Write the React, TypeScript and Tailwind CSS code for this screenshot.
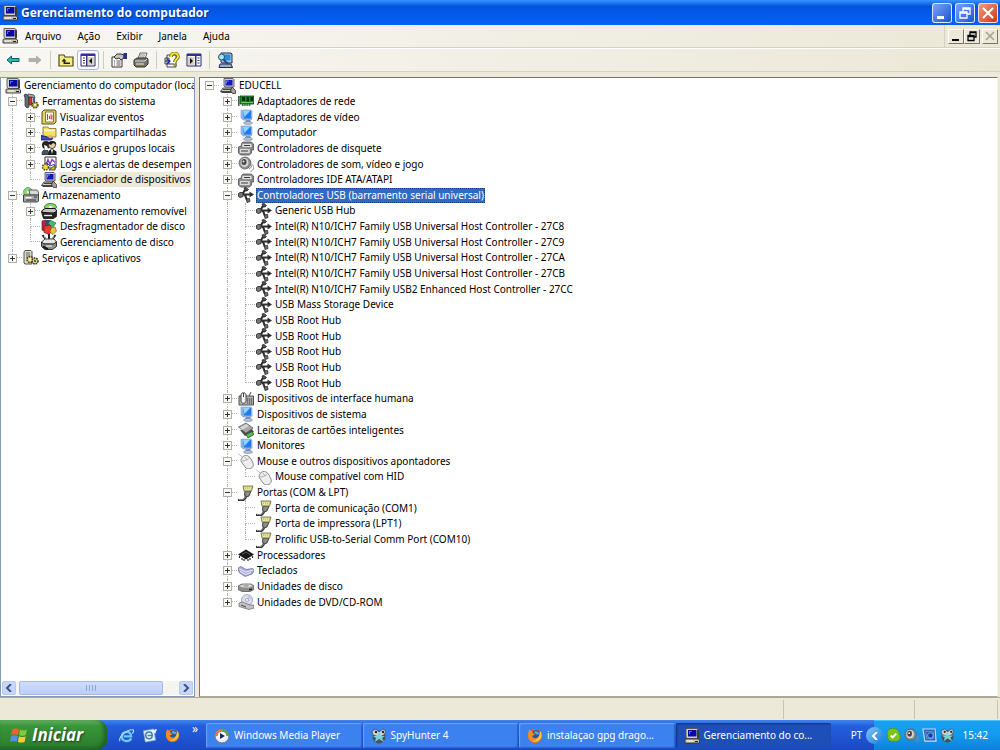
import clsx from "clsx";
import type { ReactNode } from "react";

const monitor = (
	<>
		<path d="M3 1h10l1 1v8l-1 1H5L3 9z" fill="#88b4e4" stroke="#9cb4d0" strokeWidth="0.8" />
		<path d="M5 2h8v7.500H6z" fill="#1c7cf0" />
		<path d="M5 2h7L6.500 8z" fill="#94d0ff" />
		<path d="M8 11h4l1 2H7z" fill="#7c90b0" />
		<ellipse cx="10" cy="14" rx="4.500" ry="1.500" fill="#b4c4dc" stroke="#7484a0" strokeWidth="0.6" />
	</>
);

const computer = (
	<>
		<path d="M2 0.500h11l1 1v9H3l-1-1.500z" fill="#d4d0c8" stroke="#55534c" strokeWidth="0.9" />
		<path d="M4 2h8.500v6.500H4z" fill="#0a0a9c" />
		<path d="M5 3h3v1H6v2H5z" fill="#4a6cf0" />
		<path d="M13 1.500l2 1v7.500l-2 1z" fill="#3b3933" />
		<path d="M1.500 11h12.500l1.500 1v3H1v-3z" fill="#cbc7bd" stroke="#33312c" strokeWidth="0.9" />
		<path d="M3 12.500h6v1H3z" fill="#f8f8f2" />
		<path d="M11 13h3v1h-3z" fill="#202020" />
	</>
);

const deviceComputer = (
	<>
		<path d="M4 0.500h9l1 1v7.500H5L4 8z" fill="#c8c8d4" stroke="#50506c" strokeWidth="0.9" />
		<path d="M5.500 2h7v5.500h-7z" fill="#1418b8" />
		<path d="M6 2.500h3v1H7v2H6z" fill="#6880ff" />
		<path d="M3 10h10l1.500 3.500H0.500z" fill="#d0cec6" stroke="#33312c" strokeWidth="0.9" />
		<path d="M3 11.500h9M1.500 14.500h11" stroke="#44423c" strokeWidth="1" />
		<path d="M12 9l3.500 3.500v3h-3l-2-2.500z" fill="#a4a29a" stroke="#33312c" strokeWidth="0.8" />
	</>
);

const drives = (
	<>
		<path d="M5 2h8l2.500 2v6h-2v3l-2 2H2.500l-2-2V7l3-1.500V3.500z" fill="#8c8c8c" stroke="#505050" strokeWidth="0.8" />
		<path d="M4 3.500h8.500l1.500 1v3H4z" fill="#e0e0e0" stroke="#6e6e6e" strokeWidth="0.5" />
		<path d="M1.500 8.500h9.500l1 1v4H1.500z" fill="#dadada" stroke="#6e6e6e" strokeWidth="0.5" />
		<path d="M3 11h7M6 5.500h6" stroke="#3c3c3c" strokeWidth="1.100" />
	</>
);

const firefox = (
	<>
		<circle cx="8" cy="8" r="7" fill="#e8661c" />
		<circle cx="9" cy="6.500" r="4.500" fill="#2456a6" />
		<path d="M8 3c2 0 4 1 4.500 3-1 0-2 1-3 .5S8 5 7 5z" fill="#52a6e0" />
		<path d="M1 7c0-3 1-5 2-6 0 2 1 2 3 3-1 1 0 2 2 2-1 2-2 1-3 2 1 3 5 3 7 0 1-2 1-4 0-5 3 2 4 6 1 9-4 5-12 2-12-5z" fill="#f28c24" />
		<path d="M13 3c2 2 2 6 0 8-2 3-6 3-8 2 4 0 8-3 8-10z" fill="#ffc842" />
	</>
);

const spy = (
	<>
		<circle cx="8" cy="9" r="6.500" fill="#44545c" />
		<path d="M1 3l4-2 3 3 4-3 3 2-2 4-5 2-6-2z" fill="#c8d4d8" stroke="#34444c" strokeWidth="0.7" />
		<path d="M8 4l1.500 4H14l-3 2 2 4-5-3-4 3 1-4-3-2h4z" fill="#7fd0d4" />
		<circle cx="5" cy="4" r="1.200" fill="#222" />
		<circle cx="12" cy="4" r="1.200" fill="#222" />
	</>
);

const speaker = (
	<>
		<circle cx="7" cy="7" r="6" fill="#8c8c8c" stroke="#555" strokeWidth="0.7" />
		<ellipse cx="6.500" cy="6.500" rx="4" ry="4.500" fill="#d6d6d6" />
		<ellipse cx="6" cy="6" rx="2.500" ry="3" fill="#444" />
		<circle cx="5.500" cy="5.500" r="1" fill="#eee" />
		<path d="M11 13c2-1 3.500-3 3-5M12.500 15.500c3-1 3.500-4 3-6" fill="none" stroke="#8a8a8a" strokeWidth="1" />
	</>
);

const icons = {
	computer,
	deviceComputer,
	monitor,
	drives,
	firefox,
	spy,
	speaker,
	back: <path d="M2 8l4.500-4v2.500H14v3H6.500V12z" fill="#2fb5b0" stroke="#0d5c66" strokeWidth="1" />,
	forward: <path d="M14 8l-4.500-4v2.500H2v3h7.500V12z" fill="#b4b2a8" stroke="#9a988e" strokeWidth="0.6" />,
	up: (
		<>
			<path d="M1 3h5l1 2h8v9H1z" fill="#f4ee7c" stroke="#4c4a18" strokeWidth="1.200" />
			<path d="M6 6.500L3.500 9.500H5.500V12H12v-1.500H7V9.500h1.500z" fill="#222" />
		</>
	),
	tree: (
		<>
			<path d="M1 2h14v12H1z" fill="#fff" stroke="#26266c" strokeWidth="1" />
			<path d="M1 2h14v2H1zM6 4h1.500v10H6z" fill="#32328c" />
			<path d="M3 6h2M3 8.500h2M3 11h2" stroke="#333" />
			<path d="M8 5h6v8H8z" fill="#d8d4c8" />
			<path d="M12 6v6L9 9z" fill="#111" />
		</>
	),
	panel: (
		<>
			<path d="M1 2h14v12H1z" fill="#fff" stroke="#26266c" strokeWidth="1" />
			<path d="M1 2h14v2H1zM9 4h1.500v10H9z" fill="#32328c" />
			<path d="M11.500 6h2M11.500 8.500h2M11.500 11h2" stroke="#333" />
			<path d="M2 5h6.500v8H2z" fill="#d8d4c8" />
			<path d="M4 6v6l3-3z" fill="#111" />
		</>
	),
	properties: (
		<>
			<path d="M1 5h10v10H1z" fill="#fff" stroke="#333" />
			<path d="M3 9h1M5.500 9h4M3 11h1M5.500 11h4M3 13h1M5.500 13h4" stroke="#555" />
			<path d="M3 5l3-3h4l3 1v3l-3 2-2-2-3 1z" fill="#c4c2ba" stroke="#222" strokeWidth="0.9" />
			<path d="M12.500 1H16v6h-3.500z" fill="#24308c" />
		</>
	),
	printer: (
		<>
			<path d="M5 7l2-6h7l-2 6z" fill="#f4f4f4" stroke="#444" strokeWidth="0.8" />
			<path d="M7 3h5M6.500 5h5" stroke="#777" strokeWidth="0.8" />
			<path d="M1 8l3-2h10l1 1v5l-3 3H3l-2-2z" fill="#77756f" stroke="#33312d" />
			<path d="M2 9h10l2-2" fill="none" stroke="#ddd" />
			<path d="M3 12h8" stroke="#f6f3b0" />
		</>
	),
	help: (
		<>
			<path d="M1 6h4v6H1zM3 3h9v12H3z" fill="#fff" stroke="#444" />
			<path d="M5 12h5M1 9l4 0M3 7l3 2-3 3" fill="none" stroke="#24308c" strokeWidth="1.200" />
			<path d="M7 5c0-5 7-5 7 0 0 2-3 2-3 5" fill="none" stroke="#555110" strokeWidth="3.400" />
			<path d="M7 5c0-5 7-5 7 0 0 2-3 2-3 5" fill="none" stroke="#f4e82c" strokeWidth="2" />
			<path d="M10 12h2v2h-2z" fill="#f4e82c" stroke="#555110" strokeWidth="0.6" />
		</>
	),
	scan: (
		<>
			<path d="M4 1h10l1 1v9H5l-1-1z" fill="#b4c4d8" stroke="#1c2c5c" />
			<path d="M6 2.500h7.500v6H6z" fill="#2490d8" />
			<path d="M3 12h11l1.500 3.500H2z" fill="#9cacc4" stroke="#1c2c5c" />
			<circle cx="4.500" cy="5" r="3" fill="#a8e4f4" stroke="#264c6c" />
			<path d="M6.500 7.500L11 12" stroke="#1a4c8c" strokeWidth="2" />
		</>
	),
	tools: (
		<>
			<path d="M1 2l2-1 3 2v11l-2 1-2-2V5z" fill="#60707c" stroke="#222" strokeWidth="0.7" />
			<path d="M6 3h3v9H6z" fill="#d43c2c" stroke="#40140c" strokeWidth="0.6" />
			<path d="M5 1l6 1 1 3-3-1H5z" fill="#a8b4bc" stroke="#222" strokeWidth="0.7" />
			<path d="M10 5h2v6h-2z" fill="#3c58c0" />
			<circle cx="12" cy="12" r="3" fill="#bcae3c" stroke="#383408" strokeWidth="1.300" strokeDasharray="1.500 1" />
			<circle cx="12" cy="12" r="1" fill="#fff" />
		</>
	),
	events: (
		<>
			<path d="M1 3l2-2h11l1 1v11l-2 2H1z" fill="#e4d468" stroke="#544c18" />
			<path d="M4.500 3h8v10h-8z" fill="#fffbe0" stroke="#6c6028" strokeWidth="0.8" />
			<path d="M6.500 5v6M8.500 7v3" stroke="#7c50a8" />
			<path d="M9.500 5l2 1v5l-2-1z" fill="#e05c70" />
		</>
	),
	shared: (
		<>
			<path d="M2 2h5l1 1.500h7V12H2z" fill="#f4e060" stroke="#7c7020" strokeWidth="0.8" />
			<path d="M3 4.500h11v2H3z" fill="#fffac0" />
			<path d="M0 10.500l5 1 3 1.500 3-.5 1 1-2 1.500H0z" fill="#3c50c4" stroke="#0c1040" strokeWidth="0.8" />
			<path d="M6 11l4-1 2 2-3 1.500z" fill="#d8b08c" />
		</>
	),
	users: (
		<>
			<circle cx="5" cy="5" r="4" fill="#282420" />
			<circle cx="11" cy="5" r="3.500" fill="#e8cca8" stroke="#222" strokeWidth="0.8" />
			<path d="M7 3.500c1-3.500 8-3.500 8.500 1L12 3l-2 2z" fill="#181818" />
			<path d="M1 14.500c0-4 2-5 5-5l3 5z" fill="#48566c" stroke="#111" strokeWidth="0.7" />
			<path d="M7 15l1-4.500 3-2 4.500 3V15z" fill="#1c1c24" />
			<path d="M3 5l3 1 1.500 4L4 10z" fill="#fff" />
			<path d="M11 9l1 1-1 4-1-4z" fill="#fff" />
		</>
	),
	logs: (
		<>
			<path d="M4 1h11v11H4z" fill="#fff" stroke="#333" />
			<path d="M5 9l2-5.500 2 5 2-5 3 3" fill="none" stroke="#7c3cbc" strokeWidth="1.400" />
			<path d="M5 6l4 4 5-2" fill="none" stroke="#2c4cc0" />
			<circle cx="4.500" cy="11" r="3" fill="#f0d840" stroke="#4c4408" strokeWidth="1.500" strokeDasharray="1.500 1" />
			<path d="M8 14l6-5v5z" fill="#d8bc30" stroke="#3c3408" strokeWidth="0.8" />
		</>
	),
	storage: (
		<>
			<circle cx="5" cy="5" r="4.500" fill="#8cd47c" stroke="#4c7c4c" strokeWidth="0.6" />
			<circle cx="5" cy="5" r="1.200" fill="#fff" />
			<path d="M6 3h8l1.500 2v3H7z" fill="#d8d8d8" stroke="#444" strokeWidth="0.8" />
			<path d="M0.500 8h15v6l-1 1h-14z" fill="#a8a8a6" stroke="#333" strokeWidth="0.9" />
			<path d="M2.500 10h6v1.500h-6z" fill="#f4f4f4" />
			<path d="M11 10h3M3 13h10" stroke="#333" />
		</>
	),
	removable: (
		<>
			<ellipse cx="9.500" cy="4" rx="6" ry="3.500" fill="#8cd464" stroke="#2c5c24" strokeWidth="0.8" />
			<ellipse cx="9.500" cy="4" rx="2" ry="1" fill="#fff" />
			<path d="M0.500 8l3.500-2.500h10L16 8l-3 2H2z" fill="#c4c4c4" stroke="#111" strokeWidth="1" />
			<path d="M0.500 9L12 10.500 15.500 8.500v5l-3 2H2.500z" fill="#24241f" stroke="#111" strokeWidth="0.8" />
			<path d="M3 12.500h8" stroke="#e8e8e8" strokeWidth="1.400" />
		</>
	),
	defrag: (
		<>
			<path d="M1 2l4-1v12l-4-2z" fill="#b82c3c" stroke="#44141c" strokeWidth="0.6" />
			<path d="M5 1h5v6H5z" fill="#34489c" />
			<path d="M9 1l6 3-3 4-5-3z" fill="#44bc6c" stroke="#145c2c" strokeWidth="0.6" />
			<path d="M3 7l6-1 3 5-4 4.500-5-2z" fill="#e83c30" stroke="#5c1410" strokeWidth="0.6" />
			<path d="M10 9l4-1 1.500 4-3.500 3.500-3-2.500z" fill="#e8c834" stroke="#5c4c10" strokeWidth="0.6" />
		</>
	),
	diskManager: (
		<>
			<path d="M1.500 1l3 4M14.500 1l-3 4M8 0v5" stroke="#222" strokeWidth="2" />
			<path d="M3 2l2 3M13 2l-2 3" stroke="#d8d8e8" strokeWidth="0.8" />
			<path d="M0.500 8L4 5h9l2.500 3-2.500 2H3z" fill="#e4e4e4" stroke="#333" strokeWidth="0.9" />
			<path d="M0.500 8l2.500 2h9.500l3-2v4.500l-4 3H4l-3.500-3z" fill="#8c8c8a" stroke="#222" strokeWidth="0.9" />
			<path d="M5 12h6" stroke="#fff" />
			<path d="M2 12.500l5 3" stroke="#181818" strokeWidth="2.200" />
		</>
	),
	services: (
		<>
			<path d="M2 0.500h6l1 1V14H2l-1-1V2z" fill="#dcdad0" stroke="#44423c" strokeWidth="0.9" />
			<path d="M3 3h4M3 5h4M3 7h3" stroke="#66645c" />
			<circle cx="7" cy="9.500" r="3" fill="#e8d874" stroke="#443c10" strokeWidth="1.500" strokeDasharray="1.600 0.900" />
			<circle cx="12" cy="11" r="3" fill="#d8cc7c" stroke="#33312c" strokeWidth="1.500" strokeDasharray="1.600 0.900" />
			<circle cx="7" cy="9.500" r="1" fill="#fff" />
			<circle cx="12" cy="11" r="1" fill="#444" />
		</>
	),
	network: (
		<>
			<path d="M0 3h1.500v10H0z" fill="#4c5c4c" />
			<path d="M2 3h14v8H2z" fill="#148c2c" stroke="#0c4c1c" strokeWidth="0.8" />
			<path d="M4 4h3v4H4zM8.500 4h2.500v4.500H8.500zM12.500 4H15v4h-2.500z" fill="#0c3414" />
			<path d="M3 9.500h12" stroke="#5cd46c" />
			<path d="M4 12h9" stroke="#3c7434" strokeWidth="1.800" strokeDasharray="1.500 0.700" />
		</>
	),
	usb: (
		<>
			<path d="M2 7.500h11M5 7C6 4 6 3 9 3M6 8c3 0 1 5 4 5" fill="none" stroke="#303030" strokeWidth="2" />
			<path d="M11.500 4.500L16 7.500l-4.500 3z" fill="#303030" />
			<path d="M0.500 6.500l1.500-1h3v4l-3 1-1.500-1z" fill="#777" stroke="#303030" strokeWidth="0.9" />
			<path d="M6 1l2-.5 2.500 2-1.500 1.500-2-.5z" fill="#555" stroke="#222" strokeWidth="0.8" />
			<path d="M8.500 12l3-.5.5 3-3 1z" fill="#777" stroke="#303030" strokeWidth="0.9" />
		</>
	),
	hid: (
		<>
			<path d="M1 5h14.500v9H1z" fill="#b4b4b4" stroke="#444" strokeWidth="0.9" />
			<path d="M9 8h6M9 10h6M9 12h6" stroke="#333" strokeWidth="1" strokeDasharray="1.300 0.700" />
			<path d="M3 4c0-3 5-3 5 0v6c0 3-5 3-5 0z" fill="#f2f2f2" stroke="#444" strokeWidth="1" />
			<path d="M5.500 2v4M11 5l2-4" stroke="#444" strokeWidth="1" />
		</>
	),
	cardReader: (
		<>
			<path d="M0.500 5L8 1l7 5-7 5z" fill="#a8a8a6" stroke="#5c5c5a" strokeWidth="0.8" />
			<path d="M2 5.500L8 2l3 2-7 4z" fill="#d4d4d2" />
			<path d="M2 8l5 6 9-4-2-3-6 4-4-3z" fill="#4c4c4a" />
			<path d="M8 12.500l6-3 2 3L10 16z" fill="#5cb45c" stroke="#245c24" strokeWidth="0.8" />
		</>
	),
	mouse: (
		<>
			<path d="M0.500 1c2 1 2 2 4 3" fill="none" stroke="#a8a8a8" />
			<path d="M4 5c2-4 7-3 9 1l2 4c2 5-5 8-8 4L3.500 9c-1-1-.5-3 .5-4z" fill="#eeeeee" stroke="#8c8c8c" strokeWidth="1" />
			<path d="M4 8c3 0 6-1 8-4M7 4l2 3" fill="none" stroke="#a0a0a0" strokeWidth="0.8" />
		</>
	),
	port: (
		<>
			<path d="M0 15c6 1 8-1 8-5" fill="none" stroke="#303030" strokeWidth="2.400" />
			<path d="M1 14.500c5 .5 6-1 7-4" fill="none" stroke="#b8b8b8" strokeWidth="0.8" />
			<path d="M7 6h6l-2 5-2.500 1-2-2z" fill="#8c8c8a" stroke="#333" strokeWidth="0.9" />
			<path d="M5 1h10l-1.500 5H6z" fill="#e4e4a0" stroke="#74743c" strokeWidth="0.9" />
			<path d="M7 3h7" stroke="#a8a868" strokeDasharray="1 1" />
		</>
	),
	cpu: (
		<>
			<path d="M0 7.500l8-5 8 5-8 5z" fill="#181818" />
			<path d="M1.500 9v2M4 11v2M6 12v2M10 12v2M12 11v2M14.500 9v2" stroke="#282828" strokeWidth="1.200" />
			<path d="M4 7.500L8 5l4 2.500" fill="none" stroke="#777" strokeWidth="0.7" />
		</>
	),
	keyboard: (
		<>
			<path d="M0 5l3-1.500 5 3 7-1 1 2.500-2 3-7 2.500-6-4z" fill="#acacd8" stroke="#7474a0" strokeWidth="0.8" />
			<path d="M1.500 6l6.500 3 7-2M2 8.500l6 3 5-2" fill="none" stroke="#f4f4ff" strokeWidth="0.9" />
		</>
	),
	drive: (
		<>
			<path d="M0 7l4-2h9l3 2v3.500l-4 2H4l-4-2z" fill="#8c8c8a" stroke="#5c5c5a" strokeWidth="0.8" />
			<path d="M1 7l4-1.500h7L15 7l-4 1.500H5z" fill="#dcdcda" />
			<ellipse cx="8" cy="7" rx="3" ry="1" fill="#a8a8a6" />
			<path d="M11 10.500h3" stroke="#222" strokeWidth="1.500" />
		</>
	),
	disc: (
		<>
			<circle cx="9" cy="6" r="5.500" fill="#dcdce8" stroke="#9898ac" strokeWidth="0.8" />
			<path d="M9 6l2-5 3 3z" fill="#b4ccf4" />
			<circle cx="9" cy="6" r="1.500" fill="#fff" stroke="#8c8ca0" strokeWidth="0.7" />
			<path d="M1 9l3-1 8 3h4v3l-5 1.500-10-3z" fill="#c4c4c8" stroke="#707078" strokeWidth="0.8" />
			<path d="M3 11l5 2" stroke="#444" />
		</>
	),
	windows: (
		<>
			<path d="M2 3c2-1 4-1 6 0L7 8C5 7 3 7 1 8z" fill="#f0642c" />
			<path d="M9 3c2 1 4 1 6 0l-1 5c-2 1-4 1-6 0z" fill="#84c83c" />
			<path d="M1 9c2-1 4-1 6 0l-1 5c-2-1-4-1-6 0z" fill="#5490ec" />
			<path d="M8 9c2 1 4 1 6 0l-1 5c-2 1-4 1-6 0z" fill="#f8cc38" />
		</>
	),
	explorer: (
		<>
			<path d="M13 11c-3 5-10 3-10-2 0-6 10-7 10 0H5" fill="none" stroke="#6cc8f8" strokeWidth="2.400" />
			<path d="M1 14c-2-4 8-13 14-12 1 1 0 3-1 4" fill="none" stroke="#a8e0fc" strokeWidth="1.200" />
		</>
	),
	mail: (
		<>
			<path d="M1.500 3l11-2 2 12-11 2z" fill="#e4f0fc" stroke="#7ca4cc" strokeWidth="0.8" />
			<path d="M11 9c-1 4-7 3-7-1 0-5 7-5 7 0H6" fill="none" stroke="#3c84b4" strokeWidth="1.600" />
			<path d="M10 3l6-2-2 5z" fill="#fff" />
		</>
	),
	player: (
		<>
			<circle cx="8" cy="8" r="7" fill="#e8ecf4" stroke="#64748c" />
			<path d="M8 1a7 7 0 0 1 7 7h-3a4 4 0 0 0-4-4z" fill="#58a454" />
			<path d="M8 1a7 7 0 0 0-7 7h3a4 4 0 0 1 4-4z" fill="#e8744c" />
			<circle cx="8" cy="8" r="4.300" fill="#f8f8fc" />
			<path d="M6 5l5 3-5 3z" fill="#142c6c" />
		</>
	),
	check: (
		<>
			<path d="M4 1c4-2 10 0 10 5 3 5 0 9-5 8-5 1-8-2-7-6C0 5 2 2 4 1z" fill="#7cc41c" stroke="#4c8c0c" strokeWidth="0.7" />
			<path d="M5 8l2 2 4-4" fill="none" stroke="#fff" strokeWidth="2" />
		</>
	),
	display: (
		<>
			<path d="M1 1h13l1 13H3z" fill="#2c64c4" stroke="#c4dcfc" strokeWidth="1.200" />
			<path d="M4 4h8v7H5z" fill="#1c3c94" stroke="#7cb4f4" strokeWidth="0.8" />
			<circle cx="9" cy="8" r="3" fill="none" stroke="#5cacf4" strokeWidth="1.200" />
		</>
	),
} satisfies Record<string, ReactNode>;

type IconName = keyof typeof icons;

function Icon({ name, className = "size-4" }: { name: IconName; className?: string }) {
	return (
		<svg viewBox="0 0 16 16" className={clsx("shrink-0", className)} aria-hidden="true">
			{icons[name]}
		</svg>
	);
}

interface TreeNode {
	label: string;
	icon: IconName;
	open?: boolean;
	closed?: boolean;
	state?: "active" | "inactive";
	children?: TreeNode[];
}

const consoleTree: TreeNode = {
	label: "Gerenciamento do computador (loca",
	icon: "computer",
	children: [
		{
			label: "Ferramentas do sistema",
			icon: "tools",
			open: true,
			children: [
				{ label: "Visualizar eventos", icon: "events", closed: true },
				{ label: "Pastas compartilhadas", icon: "shared", closed: true },
				{ label: "Usuários e grupos locais", icon: "users", closed: true },
				{ label: "Logs e alertas de desempen", icon: "logs", closed: true },
				{ label: "Gerenciador de dispositivos", icon: "deviceComputer", state: "inactive" },
			],
		},
		{
			label: "Armazenamento",
			icon: "storage",
			open: true,
			children: [
				{ label: "Armazenamento removível", icon: "removable", closed: true },
				{ label: "Desfragmentador de disco", icon: "defrag" },
				{ label: "Gerenciamento de disco", icon: "diskManager" },
			],
		},
		{ label: "Serviços e aplicativos", icon: "services", closed: true },
	],
};

const usbDevices = [
	"Generic USB Hub",
	"Intel(R) N10/ICH7 Family USB Universal Host Controller - 27C8",
	"Intel(R) N10/ICH7 Family USB Universal Host Controller - 27C9",
	"Intel(R) N10/ICH7 Family USB Universal Host Controller - 27CA",
	"Intel(R) N10/ICH7 Family USB Universal Host Controller - 27CB",
	"Intel(R) N10/ICH7 Family USB2 Enhanced Host Controller - 27CC",
	"USB Mass Storage Device",
	"USB Root Hub",
	"USB Root Hub",
	"USB Root Hub",
	"USB Root Hub",
	"USB Root Hub",
];

const ports = ["Porta de comunicação (COM1)", "Porta de impressora (LPT1)", "Prolific USB-to-Serial Comm Port (COM10)"];

const deviceTree: TreeNode = {
	label: "EDUCELL",
	icon: "deviceComputer",
	open: true,
	children: [
		{ label: "Adaptadores de rede", icon: "network", closed: true },
		{ label: "Adaptadores de vídeo", icon: "monitor", closed: true },
		{ label: "Computador", icon: "monitor", closed: true },
		{ label: "Controladores de disquete", icon: "drives", closed: true },
		{ label: "Controladores de som, vídeo e jogo", icon: "speaker", closed: true },
		{ label: "Controladores IDE ATA/ATAPI", icon: "drives", closed: true },
		{
			label: "Controladores USB (barramento serial universal)",
			icon: "usb",
			open: true,
			state: "active",
			children: usbDevices.map((label) => ({ label, icon: "usb" as const })),
		},
		{ label: "Dispositivos de interface humana", icon: "hid", closed: true },
		{ label: "Dispositivos de sistema", icon: "monitor", closed: true },
		{ label: "Leitoras de cartões inteligentes", icon: "cardReader", closed: true },
		{ label: "Monitores", icon: "monitor", closed: true },
		{
			label: "Mouse e outros dispositivos apontadores",
			icon: "mouse",
			open: true,
			children: [{ label: "Mouse compatível com HID", icon: "mouse" }],
		},
		{
			label: "Portas (COM & LPT)",
			icon: "port",
			open: true,
			children: ports.map((label) => ({ label, icon: "port" as const })),
		},
		{ label: "Processadores", icon: "cpu", closed: true },
		{ label: "Teclados", icon: "keyboard", closed: true },
		{ label: "Unidades de disco", icon: "drive", closed: true },
		{ label: "Unidades de DVD/CD-ROM", icon: "disc", closed: true },
	],
};

interface FlatRow {
	node: TreeNode;
	// one entry per indent column: does the guide line carry on below this row?
	trail: boolean[];
}

function flatten(node: TreeNode, trail: boolean[] = []): FlatRow[] {
	const children = node.children ?? [];
	return [
		{ node, trail },
		...children.flatMap((child, i) => flatten(child, [...trail, i < children.length - 1])),
	];
}

function Guide({ up, down, across, children }: { up?: boolean; down?: boolean; across?: boolean; children?: ReactNode }) {
	return (
		<span className="grid w-[18px] shrink-0 grid-cols-[8px_1fr] grid-rows-[1fr_1fr] self-stretch">
			<span
				className={clsx(
					"col-start-2 row-start-1 border-dotted border-[#b8b6ac]",
					up && "border-l",
					across && "border-b",
				)}
			/>
			<span className={clsx("col-start-2 row-start-2 border-dotted border-[#b8b6ac]", down && "border-l")} />
			{children}
		</span>
	);
}

function Toggle({ open, label }: { open: boolean; label: string }) {
	return (
		<button
			type="button"
			aria-label={`${open ? "Recolher" : "Expandir"} ${label}`}
			className="z-10 col-span-2 col-start-1 row-span-2 row-start-1 ml-1 grid size-[9px] place-items-center self-center border border-[#b0b0a8] bg-[#f8f7f3]"
		>
			<svg viewBox="0 0 7 7" className="size-[7px]" aria-hidden="true">
				<path d={open ? "M1 3h5v1H1z" : "M1 3h2V1h1v2h2v1H4v2H3V4H1z"} fill="#333" />
			</svg>
		</button>
	);
}

function Tree({ root, label, rootToggle, className }: { root: TreeNode; label: string; rootToggle?: boolean; className: string }) {
	return (
		<ul role="tree" aria-label={label} className={clsx("grid auto-rows-fr leading-[15px]", className)}>
			{flatten(root).map(({ node, trail }, i) => {
				const hasToggle = node.open || node.closed;
				return (
					<li
						key={i}
						role="treeitem"
						aria-level={trail.length + 1}
						aria-expanded={hasToggle ? Boolean(node.open) : undefined}
						aria-selected={Boolean(node.state)}
						className="flex items-center whitespace-nowrap"
					>
						{rootToggle && (
							<Guide across={trail.length === 0}>
								{trail.length === 0 && <Toggle open label={node.label} />}
							</Guide>
						)}
						{trail.map((more, depth) => {
							const last = depth === trail.length - 1;
							return (
								<Guide key={depth} up={last || more} down={more} across={last}>
									{last && hasToggle && <Toggle open={Boolean(node.open)} label={node.label} />}
								</Guide>
							);
						})}
						<span className="grid h-[15px] w-[18px] shrink-0 content-center justify-center">
							<Icon name={node.icon} />
						</span>
						<span
							className={clsx(
								"ml-px px-px",
								node.state === "active" && "bg-[#316ac5] text-white outline-1 -outline-offset-1 outline-dotted outline-[#1c3c74]",
								node.state === "inactive" && "bg-[#ece9d8]",
							)}
						>
							{node.label}
						</span>
					</li>
				);
			})}
		</ul>
	);
}

const captionButton = "grid size-5 place-items-center rounded-[3px] border border-white/80 text-white";
const mdiButton = "grid h-[15px] w-4 place-items-center border border-t-white border-l-white border-r-[#77756a] border-b-[#77756a] bg-[#ece9d8]";

function TitleBar() {
	return (
		<header className="flex h-[25px] items-center gap-[3px] bg-linear-to-b from-[#3a93ff] via-[#0453e0] via-25% to-[#0361f8] pr-0.5 pl-0.5">
			<Icon name="computer" />
			<h1 className="flex-1 font-['Open_Sans','Noto_Sans',sans-serif] text-[12px] font-bold text-white [text-shadow:1px_1px_1px_#0a2f8c]">
				Gerenciamento do computador
			</h1>
			<button type="button" aria-label="Minimizar" className={clsx(captionButton, "bg-linear-to-br from-[#7ba4f8] to-[#1c50d4]")}>
				<svg viewBox="0 0 16 16" className="size-4" aria-hidden="true">
					<path d="M3 11h7v3H3z" fill="#fff" />
				</svg>
			</button>
			<button type="button" aria-label="Restaurar" className={clsx(captionButton, "bg-linear-to-br from-[#7ba4f8] to-[#1c50d4]")}>
				<svg viewBox="0 0 16 16" className="size-4" fill="none" stroke="#fff" aria-hidden="true">
					<path d="M6 6V3h7v6h-3M6 4h7M3 7h7v6H3zM3 8h7" strokeWidth="1.300" />
				</svg>
			</button>
			<button type="button" aria-label="Fechar" className={clsx(captionButton, "bg-linear-to-br from-[#f09a7c] to-[#cc3010]")}>
				<svg viewBox="0 0 16 16" className="size-4" fill="none" stroke="#fff" aria-hidden="true">
					<path d="M3 3l10 10M13 3L3 13" strokeWidth="2" />
				</svg>
			</button>
		</header>
	);
}

function MenuBar() {
	return (
		<div className="flex h-[23px] items-center border-b border-[#d6d2c0] bg-linear-to-r from-[#f8f7f3] to-[#ebe8d7] pl-0.5">
			<Icon name="computer" />
			<nav aria-label="Menu principal" className="ml-[7px] flex flex-1 gap-4">
				{["Arquivo", "Ação", "Exibir", "Janela", "Ajuda"].map((item) => (
					<button key={item} type="button">
						{item}
					</button>
				))}
			</nav>
			<div className="flex h-full items-center border-l border-[#d6d2c0] pr-0.5 pl-[3px]">
				<button type="button" aria-label="Minimizar console" className={mdiButton}>
					<svg viewBox="0 0 12 12" className="size-3" aria-hidden="true">
						<path d="M2 9h7v2H2z" />
					</svg>
				</button>
				<button type="button" aria-label="Restaurar console" className={mdiButton}>
					<svg viewBox="0 0 12 12" className="size-3" fill="none" stroke="#000" aria-hidden="true">
						<path d="M4 5V2h6v5H8M4 2.500h6M2 5.500h6v5H2zM2 6.500h6" strokeWidth="1.300" />
					</svg>
				</button>
				<button type="button" aria-label="Fechar console" className={clsx(mdiButton, "ml-0.5")}>
					<svg viewBox="0 0 12 12" className="size-3" fill="none" stroke="#a5a398" aria-hidden="true">
						<path d="M2 2l8 8M10 2l-8 8" strokeWidth="1.600" />
					</svg>
				</button>
			</div>
		</div>
	);
}

function ToolButton({ icon, label, pressed }: { icon: IconName; label: string; pressed?: boolean }) {
	return (
		<button
			type="button"
			aria-label={label}
			aria-pressed={pressed}
			className={clsx("grid h-5 w-[22px] place-items-center rounded-[3px] border", pressed ? "border-[#a4b4d0] bg-white" : "border-transparent")}
		>
			<Icon name={icon} />
		</button>
	);
}

function Separator() {
	return <span className="mx-1 h-[18px] w-px bg-[#d0ccba]" />;
}

function Toolbar() {
	return (
		<div role="toolbar" className="flex h-6 items-center border-t border-b border-t-white border-b-[#d6d2c0] bg-linear-to-r from-[#f8f7f3] to-[#ebe8d7] pl-0.5">
			<ToolButton icon="back" label="Voltar" />
			<ToolButton icon="forward" label="Avançar" />
			<Separator />
			<ToolButton icon="up" label="Um nível acima" />
			<ToolButton icon="tree" label="Mostrar árvore de console" pressed />
			<Separator />
			<ToolButton icon="properties" label="Propriedades" />
			<ToolButton icon="printer" label="Imprimir" />
			<Separator />
			<ToolButton icon="help" label="Ajuda" />
			<ToolButton icon="panel" label="Mostrar painel de ações" />
			<Separator />
			<ToolButton icon="scan" label="Verificar alterações de hardware" />
		</div>
	);
}

function ScrollButton({ label, path }: { label: string; path: string }) {
	return (
		<button type="button" aria-label={label} className="grid size-[14px] place-items-center rounded-[2px] border border-[#b8c8f0] bg-[#c8d6fa]">
			<svg viewBox="0 0 8 8" className="size-2" fill="none" stroke="#3c5484" strokeWidth="2" aria-hidden="true">
				<path d={path} />
			</svg>
		</button>
	);
}

function ConsolePane() {
	return (
		<aside className="flex w-[195px] shrink-0 flex-col overflow-hidden border border-[#7f9db9] bg-white pl-[3px]">
			<Tree root={consoleTree} label="Árvore de console" className="h-[188px]" />
			<div className="mt-auto mr-px mb-px -ml-0.5 flex items-center gap-[3px] bg-[#f5f5ef]">
				<ScrollButton label="Rolar para a esquerda" path="M6 0L2 4l4 4" />
				<div className="flex-1">
					<div className="flex h-[14px] w-11/12 items-center justify-center gap-0.5 rounded-[2px] border border-[#a4b8ea] bg-linear-to-b from-[#cfdcfd] to-[#bccdf8]">
						{[0, 1, 2, 3].map((n) => (
							<span key={n} className="h-1.5 w-px bg-[#8ca4dc]" />
						))}
					</div>
				</div>
				<ScrollButton label="Rolar para a direita" path="M2 0l4 4-4 4" />
			</div>
		</aside>
	);
}

const tasks: { label: string; icon: IconName; active?: boolean }[] = [
	{ label: "Windows Media Player", icon: "player" },
	{ label: "SpyHunter 4", icon: "spy" },
	{ label: "instalaçao gpg drago...", icon: "firefox" },
	{ label: "Gerenciamento do co...", icon: "computer", active: true },
];

function Taskbar() {
	return (
		<footer className="flex h-[30px] items-stretch bg-linear-to-b from-[#3f84f0] via-[#245edc] via-20% to-[#1c48c4] text-white">
			<button
				type="button"
				className="flex w-[107px] items-center gap-1 rounded-r-[10px] bg-linear-to-b from-[#63b161] via-[#389638] via-20% to-[#2c7c2c] pl-2.5 font-['Open_Sans','Noto_Sans',sans-serif] text-[17px] font-bold italic shadow-[inset_-3px_-2px_4px_#1f5f24] [text-shadow:1px_1px_2px_#1b3f1b]"
			>
				<Icon name="windows" className="size-[18px]" />
				Iniciar
			</button>
			<div className="flex w-[99px] items-center gap-2 pl-3">
				{(["explorer", "mail", "firefox"] as const).map((name) => (
					<button key={name} type="button" aria-label={name}>
						<Icon name={name} className="size-[15px]" />
					</button>
				))}
				<button type="button" aria-label="Mais itens" className="ml-1 self-start text-[12px]">
					»
				</button>
			</div>
			<div className="flex min-w-0 max-w-[625px] flex-1 gap-px pt-[3px] pb-0.5">
				{tasks.map((task) => (
					<button
						key={task.label}
						type="button"
						className={clsx(
							"flex min-w-0 flex-1 items-center gap-1 rounded-[2px] pl-2 whitespace-nowrap",
							task.active
								? "bg-[#1e4fb8] shadow-[inset_1px_1px_2px_#123388]"
								: "bg-[#3c81f0] shadow-[inset_1px_1px_1px_#6aa4fa,inset_-1px_-1px_1px_#2a62cc]",
						)}
					>
						<Icon name={task.icon} />
						{task.label}
					</button>
				))}
			</div>
			<span className="ml-auto self-center pr-3">PT</span>
			<div className="flex items-center gap-[3px] border-t border-[#4cc0f8] bg-linear-to-b from-[#18a0f0] via-[#129aee] to-[#0f80dc] pr-3">
				<button
					type="button"
					aria-label="Mostrar ícones ocultos"
					className="-ml-2 grid size-[17px] place-items-center rounded-full bg-linear-to-br from-[#7cc8fc] to-[#1c78dc]"
				>
					<svg viewBox="0 0 8 8" className="size-2" fill="none" stroke="#fff" strokeWidth="2" aria-hidden="true">
						<path d="M6 0L2 4l4 4" />
					</svg>
				</button>
				<Icon name="check" className="size-[15px]" />
				<Icon name="speaker" className="size-[15px]" />
				<Icon name="display" className="size-[15px]" />
				<Icon name="spy" className="size-[15px]" />
				<time className="ml-1">15:42</time>
			</div>
		</footer>
	);
}

export default function App() {
	return (
		<div className="flex h-screen flex-col overflow-hidden bg-[#ece9d8] font-['Noto_Sans','Open_Sans',sans-serif] text-[10px] text-black">
			<TitleBar />
			<MenuBar />
			<Toolbar />
			<main className="flex min-h-0 flex-1 gap-1 pt-[5px] pr-0.5">
				<ConsolePane />
				<section className="flex-1 overflow-hidden border border-t-[#77756a] border-r-[#f4f3ec] border-b-[#aca899] border-l-[#77756a] bg-white pl-px">
					<Tree root={deviceTree} label="Dispositivos" rootToggle className="h-[532px]" />
				</section>
			</main>
			<div role="status" className="flex h-[23px] justify-end border-t border-[#aca899] pt-0.5 pr-0.5 pb-px">
				<span className="w-[131px] border-l border-[#c8c4b2]" />
				<span className="w-[84px] border-x border-[#c8c4b2]" />
			</div>
			<Taskbar />
		</div>
	);
}
